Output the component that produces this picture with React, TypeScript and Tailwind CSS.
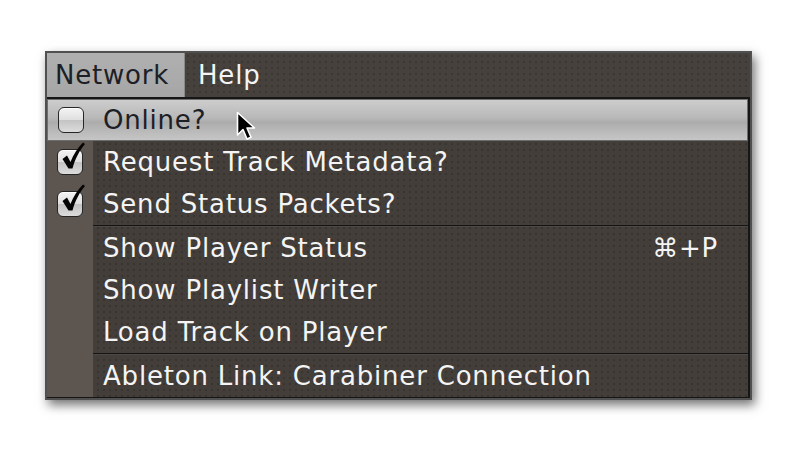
import React from "react";

const font = { fontFamily: '"DejaVu Sans", "Lucida Grande", sans-serif' };

function Checkbox({ checked }: { checked?: boolean }) {
  return (
    <div className="relative h-[26px] w-[26px] rounded-[6px] border border-[#262626] bg-[linear-gradient(#f4f4f4,#e0e0e0_48%,#c4c4c4_52%,#dcdcdc)] shadow-[inset_0_1px_0_#fff]">
      {checked && (
        <svg
          className="absolute left-[2px] top-[-8px]"
          width="26"
          height="30"
          viewBox="0 0 26 30"
        >
          <path
            d="M2.5 17 L7 13.5 L10.5 20 C13.5 12.5 17.5 6 23 0.5 L25 2 C19.5 8.5 15 17 12.5 26.5 L8.5 26.5 Z"
            fill="#050505"
          />
        </svg>
      )}
    </div>
  );
}

const label = "text-[26px] tracking-[0.8px]";

function Row({
  text,
  check,
  checked,
  shortcut,
  active,
}: {
  text: string;
  check?: boolean;
  checked?: boolean;
  shortcut?: string;
  active?: boolean;
}) {
  if (active) {
    return (
      <div className="relative flex h-[42px] items-center border border-[#6d6d6d] bg-[linear-gradient(#cdcdcd,#b8b8b8_45%,#acacac_55%,#c6c6c6)]">
        <div className="flex h-full w-[45px] items-center justify-center">
          {check && <Checkbox checked={checked} />}
        </div>
        <div className={`pl-[10px] ${label} text-[#1c2026]`}>{text}</div>
        {/* mouse pointer */}
        <svg className="absolute left-[188px] top-[11px]" width="26" height="34" viewBox="0 0 26 34">
          <path
            d="M1.5 1.5 L1.5 24 L7 18.5 L11 28 L15 26.3 L11 17 L18.5 17 Z"
            fill="#000"
            stroke="#fff"
            strokeWidth="1.6"
            strokeLinejoin="round"
          />
        </svg>
      </div>
    );
  }
  return (
    <div className="flex h-[42px] items-center">
      <div className="flex h-full w-[46px] items-center justify-center bg-[#5d5550]">
        {check && <Checkbox checked={checked} />}
      </div>
      <div className={`pl-[10px] ${label} text-[#f4f4f4]`}>{text}</div>
      {shortcut && (
        <div className={`ml-auto pr-[30px] ${label} text-[#f4f4f4]`}>{shortcut}</div>
      )}
    </div>
  );
}

function Separator() {
  return (
    <div className="flex h-[2px]">
      <div className="w-[46px] bg-[#5d5550]" />
      <div className="flex-1 border-t border-[#141414] border-b border-b-[#4e4944]" />
    </div>
  );
}

export default function App() {
  return (
    <div className="h-[452px] w-[796px] bg-white pl-[45px] pt-[51px]" style={font}>
      <div className="w-[707px] border-2 border-[#505050] bg-[#46413c] shadow-[3px_5px_10px_rgba(0,0,0,0.55)]">
        {/* menu bar */}
        <div className="flex h-[44px] items-stretch bg-[radial-gradient(rgba(0,0,0,0.16)_1px,transparent_1.6px)] bg-size-[6px_6px]">
          <div className={`flex w-[138px] items-center border-r border-[#8a8a8a] bg-[linear-gradient(#b0b0b0,#a6a6a6)] pl-[8px] ${label} text-[#1c2026]`}>
            Network
          </div>
          <div className={`flex items-center pl-[13px] ${label} text-[#f4f4f4]`}>Help</div>
        </div>
        {/* dropdown */}
        <div className="border-t-2 border-r-2 border-b border-[#161616] bg-[#433e39] bg-[radial-gradient(rgba(0,0,0,0.16)_1px,transparent_1.6px)] bg-size-[6px_6px]">
          <Row text="Online?" check active />
          <Row text="Request Track Metadata?" check checked />
          <Row text="Send Status Packets?" check checked />
          <Separator />
          <Row text="Show Player Status" shortcut="⌘+P" />
          <Row text="Show Playlist Writer" />
          <Row text="Load Track on Player" />
          <Separator />
          <Row text="Ableton Link: Carabiner Connection" />
        </div>
      </div>
    </div>
  );
}
